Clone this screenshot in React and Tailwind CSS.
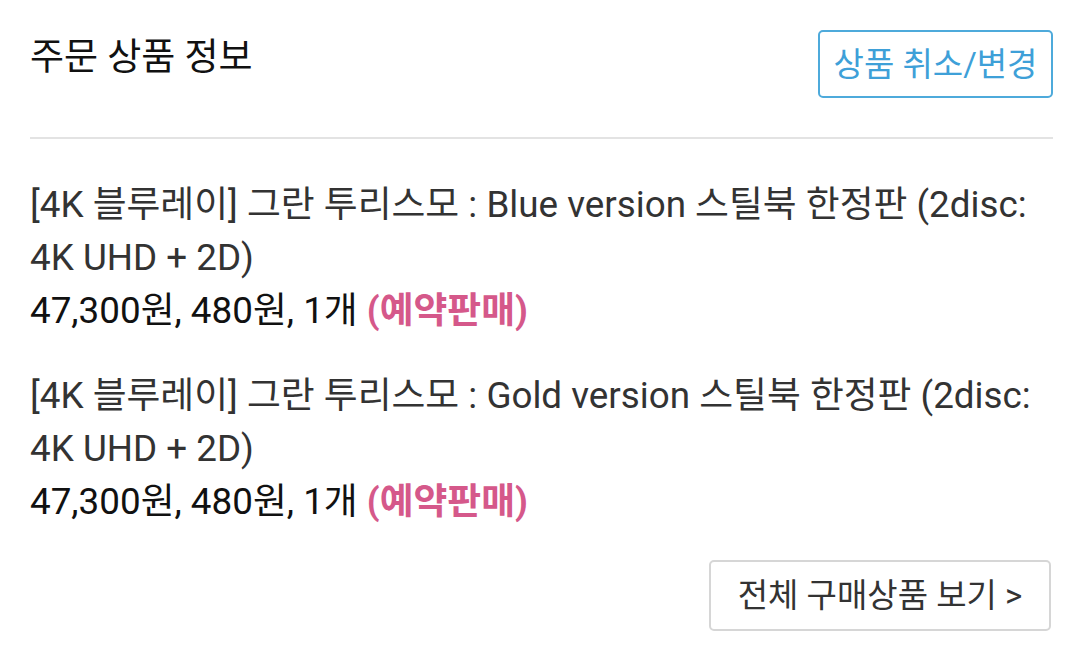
export default function App() {
  const font = { fontFamily: 'Roboto, "Noto Sans CJK KR", sans-serif' };
  const items = ["Blue", "Gold"];
  return (
    <div className="w-[1080px] h-[668px] bg-white overflow-hidden pl-[30px] pr-[27px]" style={font}>
      <div className="flex items-start justify-between pt-[30px] pb-[39px] border-b-2 border-[#e3e3e3]">
        <h1 className="mt-[6px] text-[37px] leading-[44px] font-normal text-[#111]">주문 상품 정보</h1>
        <button className="h-[68px] w-[235px] border-2 border-[#4eaadb] rounded-[5px] text-[#3ea0d8] text-[33px] leading-none">
          상품 취소/변경
        </button>
      </div>
      <div className="pt-[39px] flex flex-col gap-[32px]">
        {items.map((v) => (
          <div key={v} className="text-[36.8px] leading-[53px]">
            <p className="text-[#333]">
              [4K 블루레이] 그란 투리스모 : {v} version 스틸북 한정판 (2disc: 4K UHD + 2D)
            </p>
            <p className="text-[#111]">
              47,300원, 480원, 1개 <span className="font-bold text-[#d5588a]">(예약판매)</span>
            </p>
          </div>
        ))}
      </div>
      <div className="flex justify-end mt-[32px] pr-[2px]">
        <button className="h-[71px] w-[342px] border-2 border-[#d6d6d6] rounded-[5px] text-[#333] text-[33px] leading-none">
          전체 구매상품 보기 &gt;
        </button>
      </div>
    </div>
  );
}
